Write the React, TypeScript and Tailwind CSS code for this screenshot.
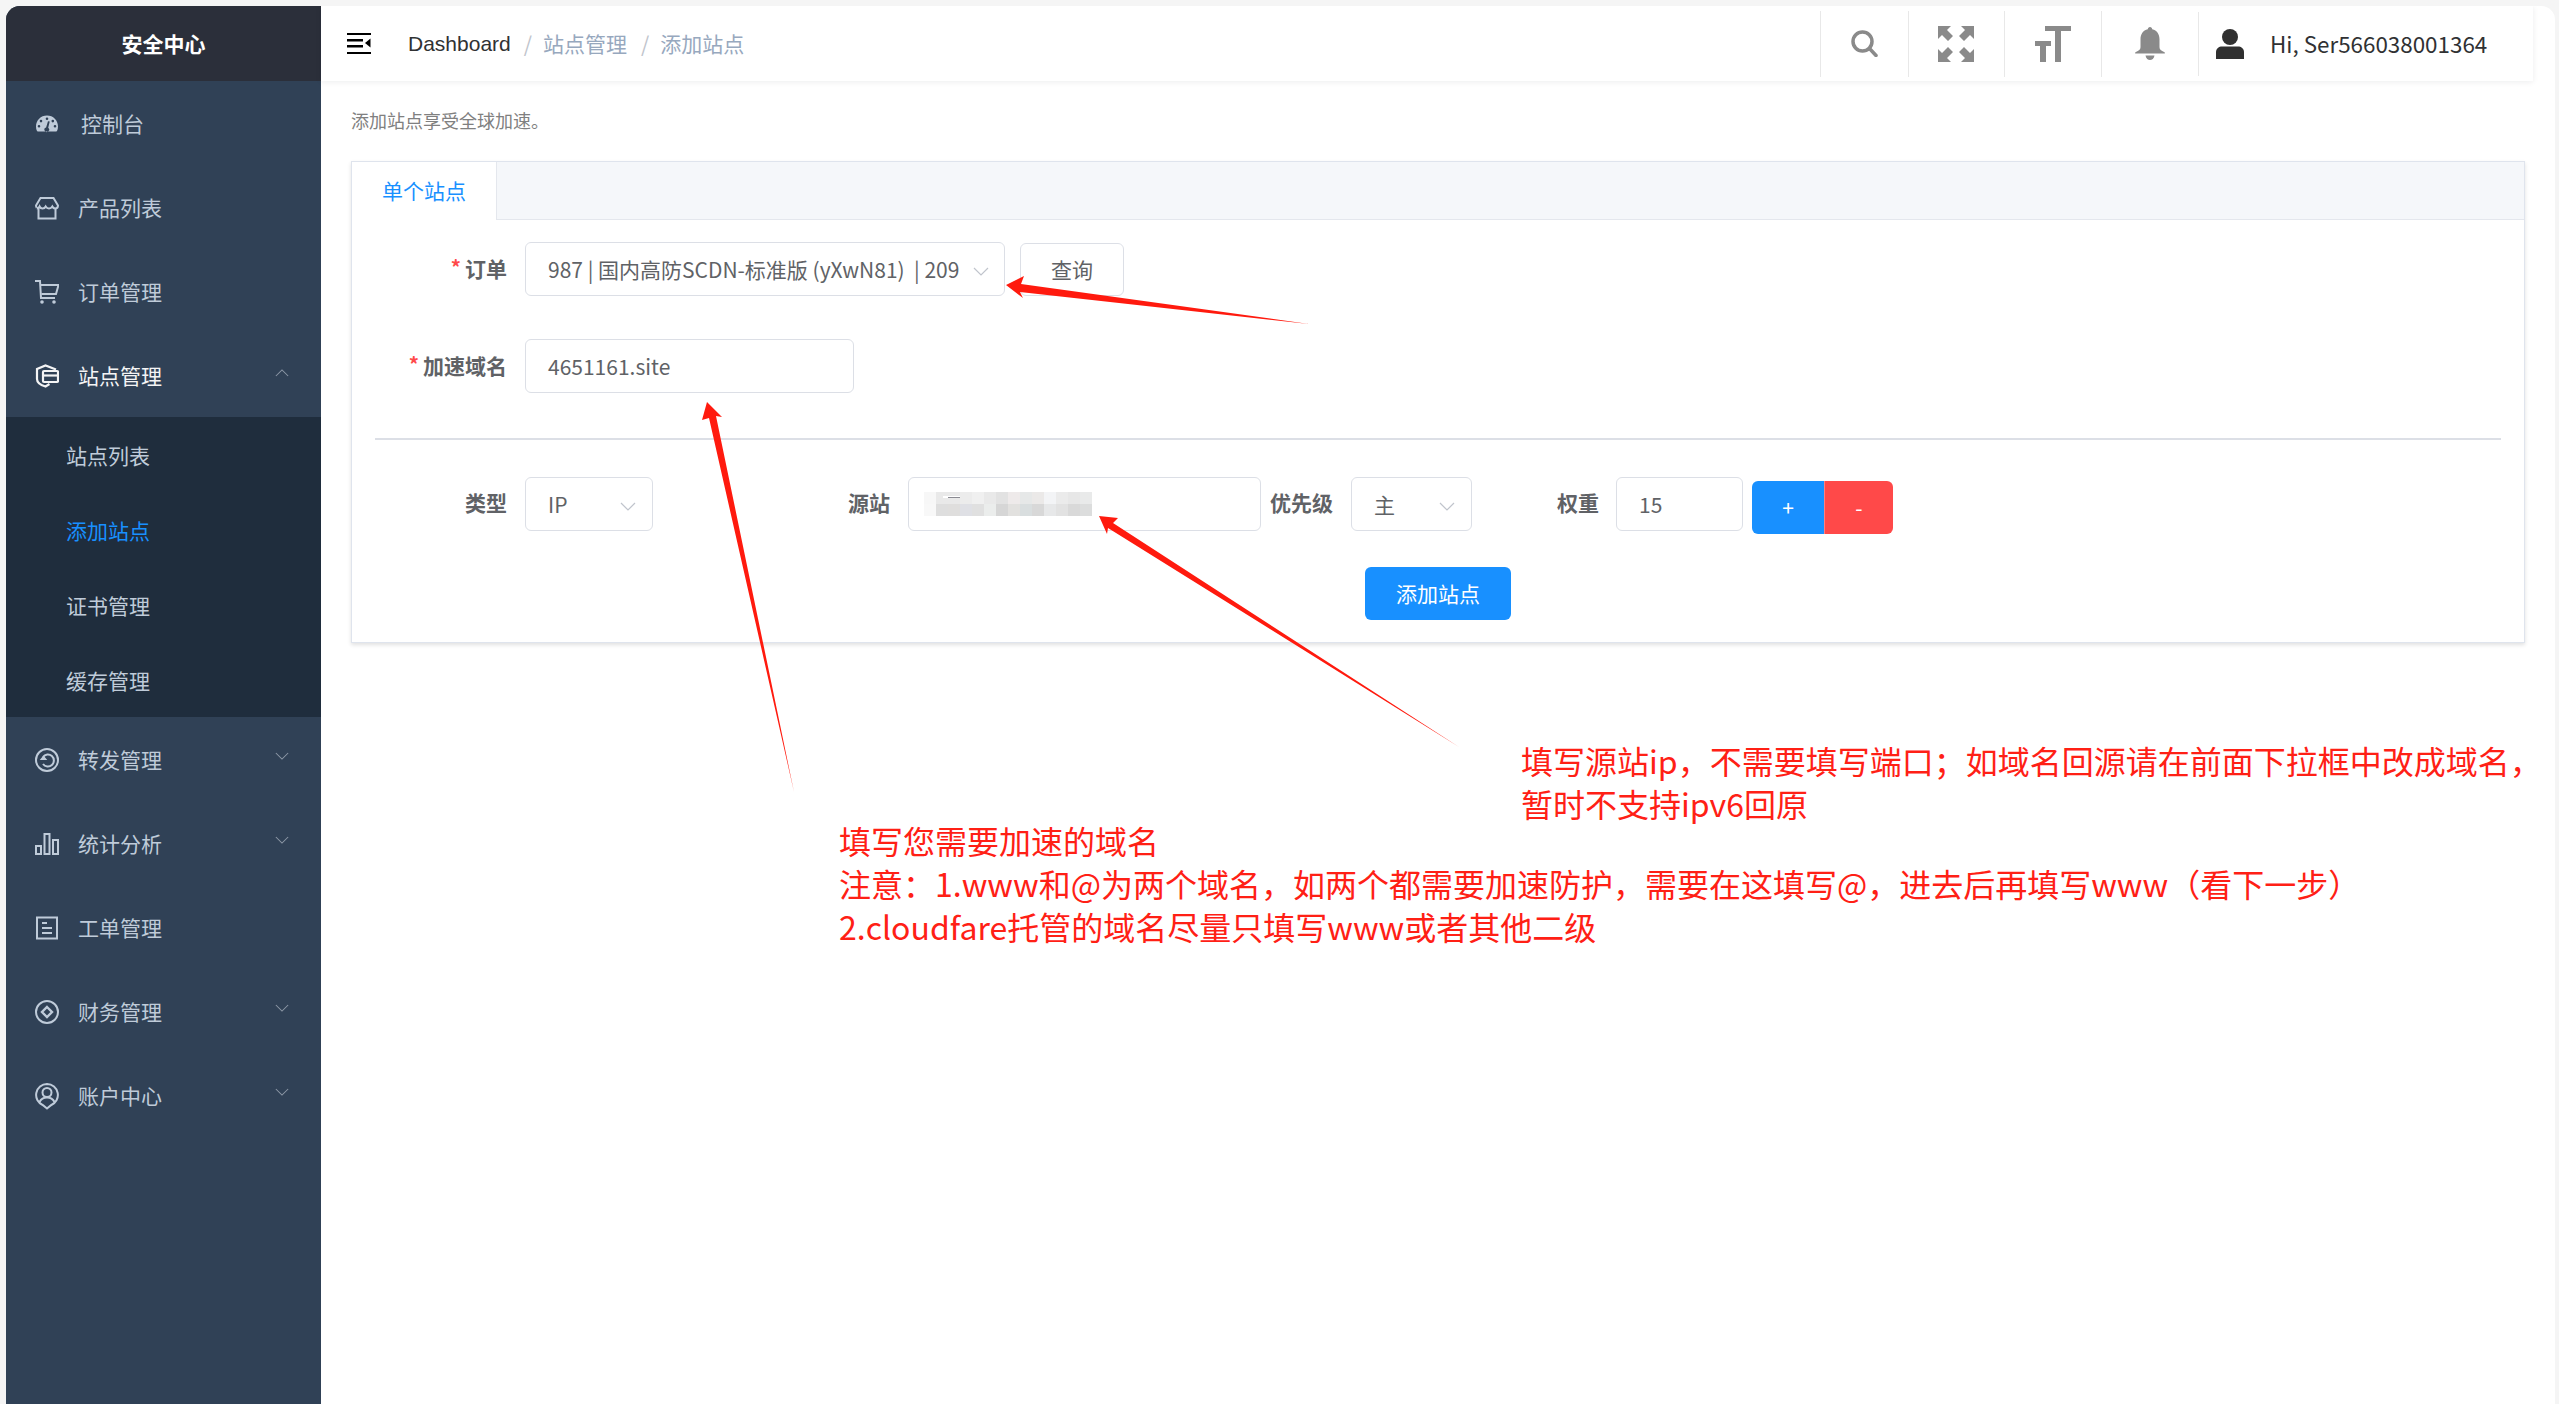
import React from "react";

const Chevron = ({ up, cls }: { up?: boolean; cls: string }) => (
  <svg viewBox="0 0 16 10" className={cls} fill="none" stroke="currentColor" strokeWidth="1.2">
    <polyline points={up ? "1,9 8,2 15,9" : "1,1 8,8 15,1"} />
  </svg>
);

const cIcon = "w-[24px] h-[24px] shrink-0 text-[#bfcbd9]";

const IconGauge = () => (
  <svg viewBox="0 0 24 24" className={cIcon}>
    <path fill="currentColor" fillRule="evenodd" d="M12 3.5C5.8 3.5 1 8.4 1 14.5c0 1.7.3 3.2 1 4.5.2.3.4.5.8.5h18.4c.4 0 .6-.2.8-.5.7-1.3 1-2.8 1-4.5 0-6.100-4.800-11-11-11zM12 5.500a1.300 1.300 0 1 1 0 2.600 1.300 1.300 0 0 1 0-2.600zM6 7.800a1.300 1.300 0 1 1 0 2.600 1.300 1.300 0 0 1 0-2.600zM17.800 7.800a1.300 1.300 0 1 1 0 2.600 1.300 1.300 0 0 1 0-2.600zM4 13a1.300 1.300 0 1 1 0 2.600A1.300 1.300 0 0 1 4 13zM20 13a1.300 1.300 0 1 1 0 2.600 1.300 1.300 0 0 1 0-2.600zM14.700 9.500l-1.500 6.300a2.300 2.300 0 1 1-2.100-.4l1.900-6.200z" />
  </svg>
);
const IconStore = () => (
  <svg viewBox="0 0 24 24" className={cIcon} fill="none" stroke="currentColor" strokeWidth="2">
    <path d="M5.500 2h13l4.500 7.500c0 1.800-1.300 3-2.800 3-1.300 0-2.300-.7-2.900-2-.8 1.300-1.800 2-3.300 2s-2.500-.7-3.300-2c-.6 1.300-1.600 2-3.200 2-1.300 0-2.300-.7-2.900-2-.6 1.300-1.400 2-2.800 2C2.300 12.500 1 11.300 1 9.500z" />
    <path d="M3.500 12v10.500h17V12" />
  </svg>
);
const IconCart = () => (
  <svg viewBox="0 0 24 24" className={cIcon} fill="none" stroke="currentColor" strokeWidth="2">
    <path d="M0 1h5l1 17h14" />
    <path d="M5.500 5h18l-2.500 9H6.500" />
    <circle cx="7" cy="22" r="1.800" fill="currentColor" stroke="none" />
    <circle cx="19" cy="22" r="1.800" fill="currentColor" stroke="none" />
  </svg>
);
const IconShield = () => (
  <svg viewBox="0 0 24 24" className="w-[24px] h-[24px] shrink-0 text-[#f4f4f5]" fill="none" stroke="currentColor" strokeWidth="2.200">
    <path d="M21 5.500 10.500 1.500 2 5v10c0 3 3.500 6 8.500 7.500l4-2.500" />
    <rect x="8" y="7" width="15" height="11" rx="1" />
    <path d="M8 11.500h15" />
  </svg>
);
const IconEye = () => (
  <svg viewBox="0 0 24 24" className={cIcon} fill="none" stroke="currentColor" strokeWidth="2">
    <circle cx="12" cy="12" r="11" />
    <path d="M8 9a6 6 0 1 1 0 7" />
    <path d="M6 11.500h5l-2.500-3z" strokeWidth="1.200" fill="currentColor" />
  </svg>
);
const IconBars = () => (
  <svg viewBox="0 0 24 24" className={cIcon} fill="none" stroke="currentColor" strokeWidth="2">
    <rect x="1" y="14" width="5" height="8" />
    <rect x="9.500" y="2" width="5" height="20" />
    <rect x="18" y="8" width="5" height="14" />
  </svg>
);
const IconDoc = () => (
  <svg viewBox="0 0 24 24" className={cIcon} fill="none" stroke="currentColor" strokeWidth="2">
    <rect x="2" y="1.500" width="20" height="21" />
    <path d="M7 7h5M7 12h10M7 17h10" />
  </svg>
);
const IconDiamond = () => (
  <svg viewBox="0 0 24 24" className={cIcon} fill="none" stroke="currentColor" strokeWidth="2">
    <circle cx="12" cy="12" r="11" />
    <path d="M12 7l5 5-5 5-5-5z" strokeWidth="2.400" />
  </svg>
);
const IconUserCircle = () => (
  <svg viewBox="0 0 24 27" className="w-[24px] h-[27px] shrink-0 text-[#bfcbd9]" fill="none" stroke="currentColor" strokeWidth="2">
    <path d="M12 1a11 11 0 0 0-4 21.200L12 25.500l4-3.300A11 11 0 0 0 12 1z" />
    <circle cx="12" cy="9.500" r="4.500" />
    <path d="M4.500 19c1.500-3 4.200-4.500 7.500-4.500s6 1.500 7.500 4.500" />
  </svg>
);

type Nav = { label: string; icon: React.ReactNode; arrow?: boolean; ml?: boolean };

const topItems: Nav[] = [
  { label: "控制台", icon: <IconGauge />, ml: true },
  { label: "产品列表", icon: <IconStore /> },
  { label: "订单管理", icon: <IconCart /> },
];
const bottomItems: Nav[] = [
  { label: "转发管理", icon: <IconEye />, arrow: true },
  { label: "统计分析", icon: <IconBars />, arrow: true },
  { label: "工单管理", icon: <IconDoc /> },
  { label: "财务管理", icon: <IconDiamond />, arrow: true },
  { label: "账户中心", icon: <IconUserCircle />, arrow: true },
];

const NavRow = ({ item }: { item: Nav }) => (
  <div className="flex h-[84px] items-center pl-[29px] pr-[32px] pt-[2px] text-[21px] text-[#bfcbd9]">
    <span className="flex w-[24px] justify-center">{item.icon}</span>
    <span className={item.ml ? "ml-[22px]" : "ml-[19px]"}>{item.label}</span>
    {item.arrow && <Chevron cls="ml-auto mb-[8px] h-[9px] w-[14px] text-[#8c97a6]" />}
  </div>
);

const subItems = [
  { label: "站点列表", active: false },
  { label: "添加站点", active: true },
  { label: "证书管理", active: false },
  { label: "缓存管理", active: false },
];

const Sidebar = () => (
  <aside className="flex w-[315px] shrink-0 flex-col bg-[#304156]">
    <div className="flex h-[75px] items-center justify-center bg-[#2b2f3a] text-[21px] font-bold text-white">安全中心</div>
    {topItems.map((i) => (
      <NavRow key={i.label} item={i} />
    ))}
    <div className="flex h-[84px] items-center pl-[29px] pr-[32px] pt-[2px] text-[21px] text-[#f4f4f5]">
      <IconShield />
      <span className="ml-[19px]">站点管理</span>
      <Chevron up cls="ml-auto mb-[8px] h-[9px] w-[14px] text-[#8c97a6]" />
    </div>
    <div className="bg-[#1f2d3d]">
      {subItems.map((s) => (
        <div
          key={s.label}
          className={
            s.active
              ? "flex h-[75px] items-center pl-[60px] pt-[2px] text-[21px] text-[#1890ff]"
              : "flex h-[75px] items-center pl-[60px] pt-[2px] text-[21px] text-[#bfcbd9]"
          }
        >
          {s.label}
        </div>
      ))}
    </div>
    {bottomItems.map((i) => (
      <NavRow key={i.label} item={i} />
    ))}
  </aside>
);

const HeaderCell = ({ w, children }: { w: string; children: React.ReactNode }) => (
  <div className={`relative flex h-full items-center justify-center ${w}`}>
    <span className="absolute left-0 top-[5px] bottom-[4px] w-px bg-[#e8e8e8]" />
    {children}
  </div>
);

const Header = () => (
  <header className="mr-[22px] flex h-[75px] items-center bg-white pl-[26px] shadow-[0_1px_6px_rgba(0,21,41,0.08)]">
    <svg viewBox="0 0 24 21" className="h-[21px] w-[24px] text-black" fill="currentColor">
      <rect x="0" y="0" width="24" height="2" />
      <rect x="0" y="6" width="16" height="2.500" />
      <rect x="0" y="12" width="16" height="2.500" />
      <rect x="0" y="19" width="24" height="2" />
      <path d="M23.500 5.500v9L18 10z" />
    </svg>
    <div className="ml-[37px] flex items-center text-[21px] leading-none">
      <span className="font-['Liberation_Sans',sans-serif] text-[#303133]">Dashboard</span>
      <span className="ml-[13px] text-[#c0c4cc]">/</span>
      <span className="ml-[11px] text-[#97a8be]">站点管理</span>
      <span className="ml-[14px] text-[#c0c4cc]">/</span>
      <span className="ml-[11px] text-[#97a8be]">添加站点</span>
    </div>
    <div className="ml-auto flex h-full items-center">
      <HeaderCell w="w-[88px]">
        <svg viewBox="0 0 27 27" className="h-[27px] w-[27px] text-[#8a8a8a]" fill="none" stroke="currentColor" strokeWidth="3.500" strokeLinecap="round">
          <circle cx="11.500" cy="11.500" r="9.500" />
          <path d="M18.500 18.500 25 25.500" />
        </svg>
      </HeaderCell>
      <HeaderCell w="w-[96px]">
        <svg viewBox="0 0 36 36" className="h-[36px] w-[36px] text-[#8a8a8a]" fill="currentColor">
          <path d="M0 0h13L9 4l6 6-5 5-6-6-4 4zM36 0v13l-4-4-6 6-5-5 6-6-4-4zM0 36V23l4 4 6-6 5 5-6 6 4 4zM36 36H23l4-4-6-6 5-5 6 6 4-4z" />
        </svg>
      </HeaderCell>
      <HeaderCell w="w-[97px]">
        <svg viewBox="0 0 36 36" className="h-[36px] w-[36px] text-[#8a8a8a]" fill="currentColor">
          <path d="M10 0h26v5h-10v31h-6V5H10zM0 15h16v5h-5v16H5V20H0z" />
        </svg>
      </HeaderCell>
      <HeaderCell w="w-[97px]">
        <svg viewBox="0 0 30 33" className="h-[33px] w-[30px] text-[#8a8a8a]" fill="currentColor">
          <path d="M15 0c1.300 0 2.200 1 2.200 2.300 4.800 1 7.300 5 7.300 10v8c0 2 1.500 3.600 5 4.900.5.200.5 1.300 0 1.300H.5c-.5 0-.5-1.100 0-1.300 3.500-1.300 5-2.900 5-4.900v-8c0-5 2.500-9 7.300-10C12.800 1 13.700 0 15 0zM10.500 28.500h9C19 31.500 17 33 15 33s-4-1.500-4.500-4.500z" />
        </svg>
      </HeaderCell>
      <div className="relative flex h-full w-[335px] items-center pl-[18px]">
        <span className="absolute left-0 top-[6px] bottom-[5px] w-px bg-[#e8e8e8]" />
        <svg viewBox="0 0 28 30" className="h-[30px] w-[28px] text-[#303030]" fill="currentColor">
          <ellipse cx="14" cy="8" rx="8" ry="8" />
          <path d="M0 30v-7c0-3.500 3-5.500 6-5.500h16c3 0 6 2 6 5.500v7z" />
        </svg>
        <span className="ml-[26px] text-[22.4px] leading-none text-[#303133]">Hi, Ser566038001364</span>
      </div>
    </div>
  </header>
);

const Label = ({ star, children, cls }: { star?: boolean; children: React.ReactNode; cls: string }) => (
  <label className={`flex items-center justify-end whitespace-nowrap text-[21px] font-bold leading-none text-[#606266] ${cls}`}>
    {star && <span className="mr-[4px] mt-[-4px] text-[20px] font-bold text-[#ff4949]">*</span>}
    {children}
  </label>
);

const Box = ({ cls, children }: { cls: string; children?: React.ReactNode }) => (
  <div className={`flex h-[54px] items-center rounded-[6px] border border-[#dcdfe6] bg-white pl-[22px] pt-[2px] text-[21px] text-[#606266] ${cls}`}>
    {children}
  </div>
);

const selectChevron = "ml-auto mt-[4px] h-[10px] w-[18px] shrink-0 text-[#c0c4cc]";

const mosaic = [
  ["bg-[#f7f7f7]", "bg-[#e9e9e9]", "bg-[#ececec]", "bg-[#f0f0f0]", "bg-[#e9e9e9]", "bg-[#e2e2e2]", "bg-[#eeeaea]", "bg-[#e6e8e8]", "bg-[#ebe9e8]", "bg-[#f3f4f6]", "bg-[#ebebeb]", "bg-[#e7e7e7]", "bg-[#e9eaea]"],
  ["bg-[#f8f8f8]", "bg-[#dedede]", "bg-[#dfdedd]", "bg-[#dfe0e5]", "bg-[#e0e0e0]", "bg-[#ebedec]", "bg-[#d6d6d6]", "bg-[#e2e1df]", "bg-[#d9dedf]", "bg-[#d8d8d8]", "bg-[#e7e8e9]", "bg-[#e2e2e2]", "bg-[#d9d9d9]", "bg-[#dcdddd]"],
];

const Mosaic = () => (
  <div className="ml-[15px] flex flex-col">
    <div className="flex">
      {mosaic[0].map((c, i) => (
        <div key={i} className={`relative h-[12px] ${i === 1 ? "w-[24px]" : "w-[12px]"} ${c}`}>
          {i === 1 && <span className="absolute left-[7px] top-[4px] h-[2px] w-[18px] bg-white" />}
          {i === 1 && <span className="absolute left-[12px] top-[5px] h-[1px] w-[12px] bg-[#8a8a92]" />}
        </div>
      ))}
    </div>
    <div className="flex">
      {mosaic[1].map((c, i) => (
        <div key={i} className={`h-[12px] w-[12px] ${c}`} />
      ))}
    </div>
  </div>
);

const Card = () => (
  <section className="mr-[30px] mt-[27px] border border-[#dfe4ed] bg-white pb-[22px] shadow-[0_2px_4px_rgba(0,0,0,0.12)]">
    <div className="flex h-[58px] border-b border-[#e4e7ed] bg-[#f5f7fa]">
      <div className="mb-[-1px] flex w-[145px] items-center justify-center border-r border-[#e4e7ed] bg-white text-[21px] text-[#1890ff]">单个站点</div>
    </div>
    <div className="mt-[22px] flex h-[54px]">
      <Label star cls="w-[155px] pb-[1px]">订单</Label>
      <Box cls="ml-[18px] w-[480px] pr-[14px]">
        <span className="whitespace-nowrap">987 | 国内高防SCDN-标准版 (yXwN81) &nbsp;| 209</span>
        <Chevron cls={selectChevron} />
      </Box>
      <button className="ml-[15px] mt-[1px] h-[53px] w-[104px] rounded-[6px] border border-[#dcdfe6] bg-white pt-[1px] text-[21px] text-[#606266]">查询</button>
    </div>
    <div className="mt-[43px] flex h-[54px]">
      <Label star cls="w-[155px] pb-[1px]">加速域名</Label>
      <Box cls="ml-[18px] w-[329px]">4651161.site</Box>
    </div>
    <div className="mx-[23px] mt-[45px] h-[2px] bg-[#dcdfe6]" />
    <div className="mt-[37px] flex h-[54px]">
      <Label cls="w-[155px] pb-[3px]">类型</Label>
      <Box cls="ml-[18px] w-[128px] pr-[15px]">
        <span>IP</span>
        <Chevron cls={selectChevron} />
      </Box>
      <Label cls="ml-[195px] pb-[3px]">源站</Label>
      <div className="ml-[18px] flex h-[54px] w-[353px] items-center rounded-[6px] border border-[#dcdfe6] bg-white">
        <Mosaic />
      </div>
      <Label cls="ml-[9px] pb-[3px]">优先级</Label>
      <Box cls="ml-[18px] w-[121px] pr-[15px]">
        <span>主</span>
        <Chevron cls={selectChevron} />
      </Box>
      <Label cls="ml-[85px] pb-[3px]">权重</Label>
      <Box cls="ml-[17px] w-[127px]">15</Box>
      <div className="ml-[9px] mt-[4px] flex h-[53px] text-[21px] text-white">
        <button className="w-[72px] rounded-l-[6px] bg-[#1890ff]">+</button>
        <button className="w-[69px] rounded-r-[6px] border-l border-[#ff8080] bg-[#ff4949]">-</button>
      </div>
    </div>
    <div className="mt-[36px] flex justify-center">
      <button className="h-[53px] w-[146px] rounded-[6px] bg-[#1890ff] text-[21px] text-white">添加站点</button>
    </div>
  </section>
);

const Arrows = () => (
  <svg viewBox="0 0 2559 1404" className="pointer-events-none absolute left-0 top-0 h-[1404px] w-[2559px]" fill="#ff1a0e">
    <polygon points="1006,285 1024,276 1021,284 1309,324 1020,292 1023,298" />
    <polygon points="707,402 722,417 716,416 794,792 709,418 702,420" />
    <polygon points="1099,516 1118,518 1113,523 1459,747 1108,528 1107,534" />
  </svg>
);

export default function App() {
  return (
    <div
      className="relative h-[1404px] w-[2559px] overflow-hidden bg-[#f5f5f5] pl-[6px] pr-[4px] pt-[6px]"
      style={{ fontFamily: '"Noto Sans CJK SC", "Noto Sans", sans-serif' }}
    >
      <div className="flex h-full overflow-hidden rounded-t-[14px] bg-white">
        <Sidebar />
        <main className="min-w-0 flex-1">
          <Header />
          <div className="pl-[30px]">
            <p className="mt-[25px] text-[18px] leading-[28px] text-[#808080]">添加站点享受全球加速。</p>
            <Card />
          </div>
        </main>
      </div>
      <Arrows />
      <div className="absolute left-[1521px] top-[739px] whitespace-nowrap text-[32px] leading-[43px] text-[#ff2015]">
        填写源站ip，不需要填写端口；如域名回源请在前面下拉框中改成域名，
        <br />
        暂时不支持ipv6回原
      </div>
      <div className="absolute left-[839px] top-[819px] whitespace-nowrap text-[32px] leading-[43px] text-[#ff2015]">
        填写您需要加速的域名
        <br />
        注意：1.www和@为两个域名，如两个都需要加速防护，需要在这填写@，进去后再填写www（看下一步）
        <br />
        2.cloudfare托管的域名尽量只填写www或者其他二级
      </div>
    </div>
  );
}
